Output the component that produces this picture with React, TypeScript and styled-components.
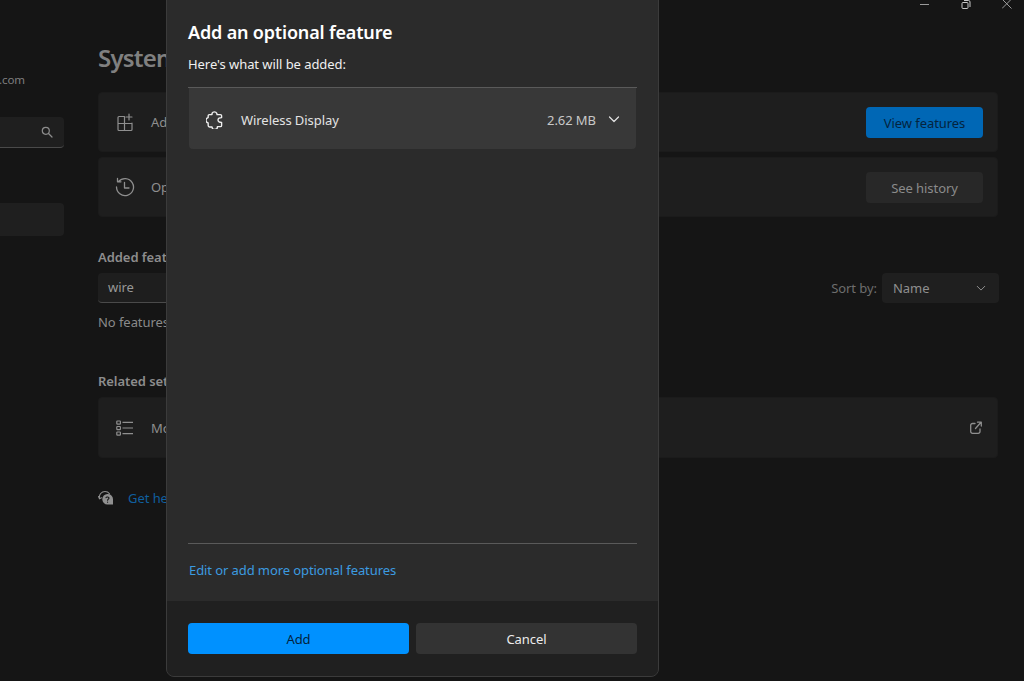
import React from "react";
import styled, { createGlobalStyle } from "styled-components";

const Global = createGlobalStyle`
  html, body { margin: 0; padding: 0; background: #151515; overflow: hidden; }
  * { box-sizing: border-box; }
  #root { width: 1024px; height: 681px; overflow: hidden; }
`;

const FONT = `"Noto Sans", "Open Sans", "Liberation Sans", sans-serif`;

const Page = styled.div`
  position: relative; width: 1024px; height: 681px; display: flex; letter-spacing: -0.06px;
  background: #151515; font-family: ${FONT}; font-size: 13px; color: #8a8a8a; overflow: hidden;
`;
const Sidebar = styled.aside`
  width: 64px; flex: none; display: flex; flex-direction: column; padding-top: 71px;
`;
const Account = styled.div`
  width: 25px; height: 18px; line-height: 18px; font-size: 11.5px; color: #7f7f7f;
  display: flex; justify-content: flex-end; overflow: hidden; white-space: nowrap;
`;
const SearchBox = styled.div`
  margin-top: 28px; height: 31px; background: #1f1f1f; border-radius: 0 4px 4px 0;
  border-bottom: 1px solid #4a4a4a; display: flex; align-items: center; justify-content: flex-end; padding-right: 11px; color: #8d8d8d;
`;
const NavSelected = styled.div`
  margin-top: 55px; height: 33px; background: #1f1f1f; border-radius: 0 4px 4px 0;
`;
const Main = styled.main`
  flex: 1; padding: 0 25px 0 34px; display: flex; flex-direction: column; min-width: 0;
`;
const Heading = styled.h1`
  margin: 39px 0 0; height: 38px; line-height: 38px; font-size: 24px; font-weight: 600; letter-spacing: -0.8px; color: #808080; white-space: nowrap;
`;
const Card = styled.section<{ $mt: number; $h: number }>`
  margin-top: ${p => p.$mt}px; height: ${p => p.$h}px; background: #1e1e1e; border: 1px solid #1b1b1b; border-radius: 4px;
  margin-right: 1px; display: flex; align-items: center; padding: 0 14px 0 16px; color: #8f8f8f;
`;
const CardIcon = styled.span`
  width: 20px; height: 20px; margin-right: 16px; display: flex; color: #8f8f8f; flex: none;
`;
const CardText = styled.span`
  flex: 1; white-space: nowrap; font-size: 13px;
`;
const ActionButton = styled.div<{ $primary?: boolean }>`
  width: 117px; height: 31px; border-radius: 4px; display: flex; align-items: center; justify-content: center; font-size: 13px; padding-top: 1px;
  background: ${p => (p.$primary ? "#0067b5" : "#282828")};
  color: ${p => (p.$primary ? "#04243f" : "#8b8b8b")};
`;
const SectionLabel = styled.div<{ $mt: number }>`
  margin-top: ${p => p.$mt}px; height: 18px; line-height: 18px; font-size: 13px; font-weight: 600; color: #8d8d8d; white-space: nowrap;
`;
const FilterRow = styled.div`
  margin-top: 7px; height: 30px; display: flex; align-items: center;
`;
const FilterInput = styled.div`
  width: 300px; height: 30px; padding-left: 10px; line-height: 28px; color: #989898; background: #1e1e1e;
  border-radius: 4px; border-bottom: 1px solid #4a4a4a; font-size: 13px;
`;
const SortLabel = styled.span`
  margin-left: auto; margin-right: 5px; color: #6d6d6d; font-size: 13px;
`;
const SortSelect = styled.div`
  width: 117px; height: 30px; background: #1f1f1f; border-radius: 4px; display: flex; align-items: center; justify-content: space-between;
  padding: 0 13px 0 11px; color: #8f8f8f; font-size: 13px;
`;
const Plain = styled.div`
  margin-top: 10px; height: 18px; line-height: 18px; color: #8a8a8a; font-size: 13px; white-space: nowrap;
`;
const HelpRow = styled.div`
  margin-top: 31px; height: 18px; display: flex; align-items: center; gap: 14px; color: #105f9f; font-size: 13px; white-space: nowrap;
`;
const HelpIcon = styled.span`
  width: 16px; height: 16px; display: flex; color: #909090;
`;
const WindowControls = styled.div`
  position: absolute; top: 0; right: 0; display: flex; align-items: flex-start; color: #9a9a9a;
`;
const WindowButton = styled.span<{ $w: number }>`
  width: ${p => p.$w}px; height: 10px; display: flex; justify-content: center; overflow: hidden;
`;
const Dialog = styled.div`
  position: absolute; left: 166px; top: -8px; width: 493px; height: 685px; display: flex; flex-direction: column;
  background: #2b2b2b; border: 1px solid #3b3b3b; border-radius: 8px; overflow: hidden; color: #fff;
`;
const DialogBody = styled.div`
  flex: 1; display: flex; flex-direction: column; padding: 0 21px 0 21px; min-height: 0;
`;
const DialogTitle = styled.h2`
  margin: 25px 0 0; height: 28px; line-height: 28px; font-size: 18px; font-weight: 600; letter-spacing: -0.17px; color: #fff; white-space: nowrap;
`;
const DialogSub = styled.div`
  margin-top: 9px; height: 18px; line-height: 18px; font-size: 13px; color: #f0f0f0;
`;
const Divider = styled.div<{ $mt?: number }>`
  margin-top: ${p => p.$mt ?? 0}px; height: 1px; background: #5a5a5a; flex: none;
`;
const FeatureList = styled.div`
  flex: 1; min-height: 0;
`;
const FeatureRow = styled.div`
  margin: 0 1px; height: 61px; background: #383838; border-radius: 0 0 4px 4px; display: flex; align-items: center; padding: 2px 16px 0 17px; font-size: 13px; color: #e3e3e3;
`;
const FeatureIcon = styled.span`
  width: 18px; height: 18px; display: flex; margin-right: 17px; color: #efefef;
`;
const FeatureName = styled.span`
  flex: 1;
`;
const FeatureSize = styled.span`
  margin-right: 12px; color: #c8c8c8;
`;
const FeatureChevron = styled.span`
  display: flex; margin-top: -1px;
`;
const LinkLine = styled.div`
  height: 57px; padding: 17px 0 0 1px; line-height: 18px; font-size: 13px; letter-spacing: -0.09px; color: #3c9be0; flex: none;
`;
const DialogFooter = styled.div`
  height: 75px; flex: none; background: #202020; padding: 22px 21px 0; display: flex; gap: 7px;
`;
const DialogButton = styled.div<{ $primary?: boolean }>`
  flex: 1; height: 31px; border-radius: 4px; display: flex; align-items: center; justify-content: center; font-size: 13px;
  background: ${p => (p.$primary ? "#0091ff" : "#333333")};
  color: ${p => (p.$primary ? "#04233d" : "#ececec")};
`;

const Chevron = ({ size = 12 }: { size?: number }) => (
  <svg width={size} height={size} viewBox="0 0 12 12" fill="none" stroke="currentColor" strokeWidth="1.2" strokeLinecap="round" strokeLinejoin="round">
    <path d="M1.5 4l4.5 4.5L10.5 4" />
  </svg>
);

export default function App() {
  return (
    <Page>
      <Global />
      <Sidebar>
        <Account>user@outlook.com</Account>
        <SearchBox>
          <svg width="12" height="12" viewBox="0 0 12 12" fill="none" stroke="currentColor" strokeWidth="1.2" strokeLinecap="round">
            <circle cx="4.8" cy="4.8" r="3.5" /><path d="M7.5 7.5l3.5 3.5" />
          </svg>
        </SearchBox>
        <NavSelected />
      </Sidebar>
      <Main>
        <Heading>System &gt; Optional features</Heading>
        <Card $mt={15} $h={60}>
          <CardIcon>
            <svg width="20" height="20" viewBox="0 0 20 20" fill="none" stroke="currentColor" strokeWidth="1.2" strokeLinecap="round">
              <path d="M9.500 4.500H4a1 1 0 0 0-1 1v12a1 1 0 0 0 1 1h12a1 1 0 0 0 1-1v-6.500M9.500 4.500v14M3 11.500h14M14 2v6M11 5h6" />
            </svg>
          </CardIcon>
          <CardText>Add an optional feature</CardText>
          <ActionButton $primary>View features</ActionButton>
        </Card>
        <Card $mt={5} $h={60}>
          <CardIcon>
            <svg width="20" height="20" viewBox="0 0 20 20" fill="none" stroke="currentColor" strokeWidth="1.3" strokeLinecap="round" strokeLinejoin="round">
              <path d="M3.600 4.500A8.500 8.500 0 1 1 1.500 10M2.500 1.500v3.300h3.500M9.500 5.500V11h4.500" />
            </svg>
          </CardIcon>
          <CardText>Optional features history</CardText>
          <ActionButton>See history</ActionButton>
        </Card>
        <SectionLabel $mt={31}>Added features</SectionLabel>
        <FilterRow>
          <FilterInput>wire</FilterInput>
          <SortLabel>Sort by:</SortLabel>
          <SortSelect>Name<Chevron size={10} /></SortSelect>
        </FilterRow>
        <Plain>No features found</Plain>
        <SectionLabel $mt={41}>Related settings</SectionLabel>
        <Card $mt={7} $h={61}>
          <CardIcon>
            <svg width="20" height="20" viewBox="0 0 20 20" fill="none" stroke="currentColor" strokeWidth="1.2">
              <rect x="1.800" y="3" width="3.600" height="3.200" rx=".6" /><rect x="1.800" y="8.500" width="3.600" height="3.200" rx=".6" /><rect x="1.800" y="14" width="3.600" height="3.200" rx=".6" />
              <path d="M7.500 4.400h10.500M7.500 10h10.500M7.500 15.600h10.500" />
            </svg>
          </CardIcon>
          <CardText>More Windows features</CardText>
          <svg width="12" height="13" viewBox="0 0 12 13" fill="none" stroke="#8f8f8f" strokeWidth="1.3" strokeLinecap="round" strokeLinejoin="round" style={{ marginRight: 1 }}>
            <path d="M5 2.500H2.500A1.800 1.800 0 0 0 .7 4.300v6.200a1.800 1.800 0 0 0 1.800 1.800h5.700a1.800 1.800 0 0 0 1.800-1.800V8M5.500 7.500L11 1.300M7.500 1.200h3.800V5" />
          </svg>
        </Card>
        <HelpRow>
          <HelpIcon>
            <svg width="16" height="16" viewBox="0 0 16 16" fill="none" stroke="currentColor" strokeWidth="1.1" strokeLinecap="round">
              <path d="M1.500 8.500C.8 4.500 3.500 1.500 7 1.500c2 0 3.500 .8 4.500 2.200M.5 6.500l1 2.200 2-1" />
              <path d="M9.500 4a5.200 5.200 0 1 0 0 10.400h5.500V9.300A5.200 5.200 0 0 0 9.500 4z" fill="currentColor" stroke="none" />
              <path d="M8 7.700c.3-1 3-1 3 .4 0 1-1.400 1-1.400 2.200M9.600 12v.3" stroke="#151515" strokeWidth="1.100" />
            </svg>
          </HelpIcon>
          Get help
        </HelpRow>
      </Main>
      <WindowControls>
        <WindowButton $w={32}><svg width="10" height="10" viewBox="0 0 10 10"><path d="M0 4.500h9" stroke="currentColor" strokeWidth="1" /></svg></WindowButton>
        <WindowButton $w={49}>
          <svg width="10" height="10" viewBox="0 0 10 10" fill="none" stroke="#c8c8c8" strokeWidth="1"><rect x="1" y="2.500" width="6" height="6" rx="1" /><path d="M3 .5h4.500A1.500 1.500 0 0 1 9 2v5" /></svg>
        </WindowButton>
        <WindowButton $w={34}><svg width="10" height="10" viewBox="0 0 10 10"><path d="M0 -1l9.500 9.500M9.500 -1L0 8.500" stroke="currentColor" strokeWidth="1" /></svg></WindowButton>
      </WindowControls>
      <Dialog>
        <DialogBody>
          <DialogTitle>Add an optional feature</DialogTitle>
          <DialogSub>Here's what will be added:</DialogSub>
          <Divider $mt={14} />
          <FeatureList>
            <FeatureRow>
              <FeatureIcon>
                <svg width="18" height="18" viewBox="2 1.500 15 15" fill="none" stroke="currentColor" strokeWidth="1.150" strokeLinejoin="round">
                  <path d="M7 3.500a2.200 2.200 0 0 1 4 0l.2 1H14a1 1 0 0 1 1 1V7c-2 0-3 .8-3 2s1 2 3 2v2.500a1 1 0 0 1-1 1h-2.500a2.200 2.200 0 0 1-4.500.3H5a1.200 1.200 0 0 1-1.200-1.200v-2.100a2.300 2.300 0 0 1 0-4.500V5.500a1 1 0 0 1 1-1H7z" />
                </svg>
              </FeatureIcon>
              <FeatureName>Wireless Display</FeatureName>
              <FeatureSize>2.62 MB</FeatureSize>
              <FeatureChevron><Chevron /></FeatureChevron>
            </FeatureRow>
          </FeatureList>
          <Divider />
          <LinkLine>Edit or add more optional features</LinkLine>
        </DialogBody>
        <DialogFooter>
          <DialogButton $primary>Add</DialogButton>
          <DialogButton>Cancel</DialogButton>
        </DialogFooter>
      </Dialog>
    </Page>
  );
}
